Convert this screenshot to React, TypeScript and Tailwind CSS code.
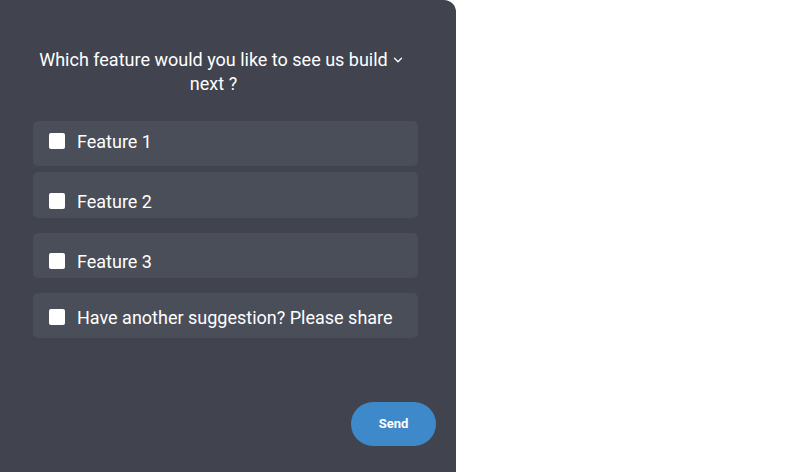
import { ChevronDown } from 'lucide-react';

const items = [
  { label: 'Feature 1', cls: 'mt-[25px] h-[45px] pt-[12px]' },
  { label: 'Feature 2', cls: 'mt-[6px] h-[46px] pt-[21px]' },
  { label: 'Feature 3', cls: 'mt-[15px] h-[45px] pt-[20px]' },
  { label: 'Have another suggestion? Please share', cls: 'mt-[15px] h-[45px] pt-[16px]' },
];

export default function App() {
  return (
    <div className="w-[810px] h-[472px] bg-white overflow-hidden" style={{ fontFamily: 'Roboto, "Noto Sans", sans-serif' }}>
      <div className="w-[456px] h-[472px] bg-[#41444f] rounded-tr-[12px] flex flex-col px-[33px] pt-[48px]">
        <h2 className="text-[18px] leading-[24px] text-white text-center pr-[29px]">
          Which feature would you like to see us build
          <span className="relative inline-block w-0 h-[14px]">
            <ChevronDown className="absolute left-[3px] top-[1px] w-[14px] h-[14px]" strokeWidth={2.2} />
          </span>{' '}
          next ?
        </h2>
        <div className="flex flex-col w-[385px]">
          {items.map((it) => (
            <label key={it.label} className={`flex items-start bg-[#4a4e59] rounded-[5px] pl-[16px] ${it.cls}`}>
              <span className="w-[16px] h-[16px] bg-white rounded-[2px] shrink-0" />
              <span className="ml-[12px] -mt-[3px] text-[18px] leading-[24px] text-white">{it.label}</span>
            </label>
          ))}
        </div>
        <div className="flex justify-end mt-[64px] -mr-[13px]">
          <button className="w-[85px] h-[44px] rounded-full bg-[#3d89c9] text-white text-[13px] font-bold">
            Send
          </button>
        </div>
      </div>
    </div>
  );
}
